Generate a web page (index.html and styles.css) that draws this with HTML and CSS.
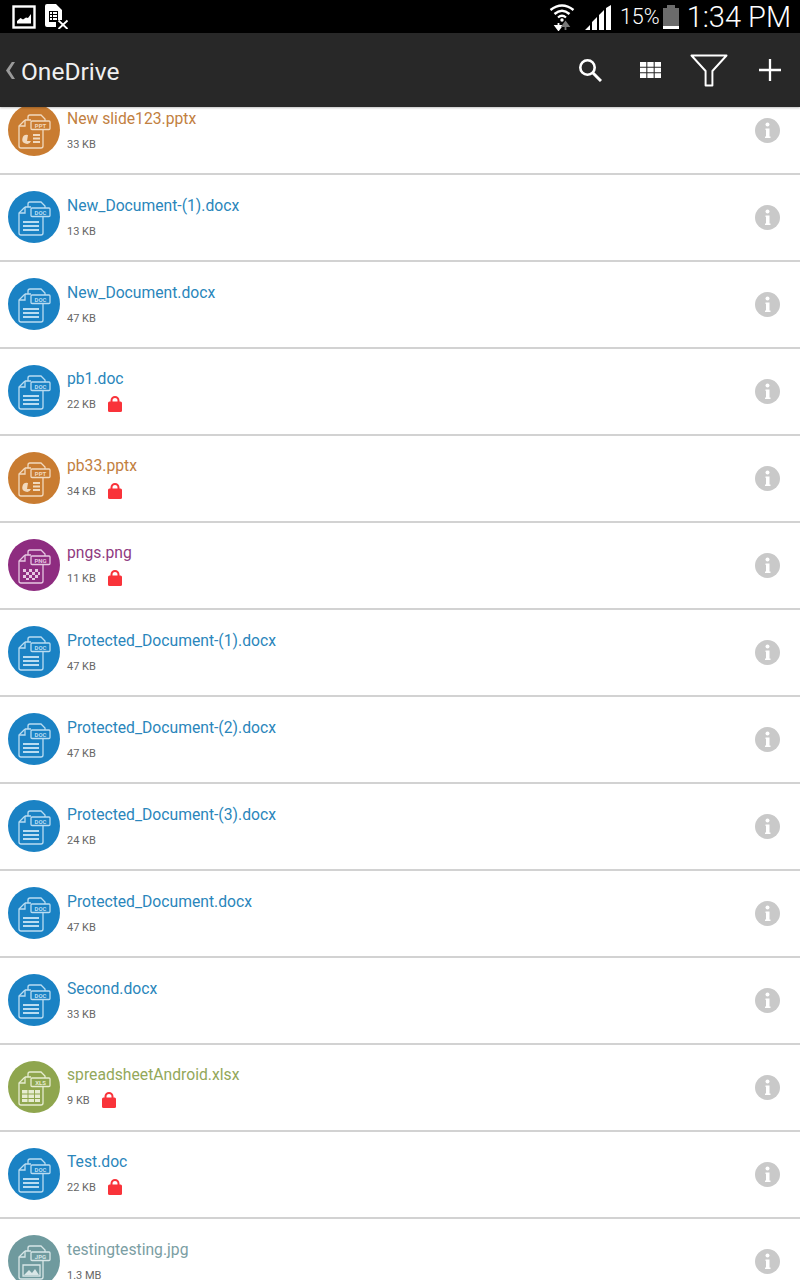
FILE: index.html
```html
<!DOCTYPE html>
<html lang="en">
<head>
    <meta charset="UTF-8">
    <meta name="viewport" content="width=device-width, initial-scale=1.0">
    <title>OneDrive</title>
    <link rel="stylesheet" href="styles.css">
</head>
<body>

<svg class="defs" width="0" height="0">
    <defs>
        <g id="sheet" fill="none" stroke="currentColor" stroke-width="1.3">
            <path d="M20 16V13q0-2 2-2H33l4 4v2"/>
            <path d="M17 16L11 22V42q0 2 2 2H33q2 0 2-2V26"/>
            <path d="M17 16H23M17 16v6h-6"/>
            <rect x="23" y="17" width="19" height="8.5" rx="1"/>
        </g>
        <symbol id="file-doc" viewBox="0 0 52 52">
            <circle cx="26" cy="26" r="26" fill="#1a82c4"/>
            <g color="#b9dcf1">
                <use href="#sheet"/>
                <text class="tag" x="32.5" y="23.6">DOC</text>
                <path d="M15 31H31M15 35H31M15 39H31" stroke="currentColor" stroke-width="2.2"/>
            </g>
        </symbol>
        <symbol id="file-ppt" viewBox="0 0 52 52">
            <circle cx="26" cy="26" r="26" fill="#c97c31"/>
            <g color="#f1d9be">
                <use href="#sheet"/>
                <text class="tag" x="32.5" y="23.6">PPT</text>
                <path d="M20 31a4.500 4.500 0 1 0 3 6h-4z" fill="currentColor"/>
                <path d="M25 31H32M25 34.500H32M25 38H32" stroke="currentColor" stroke-width="2"/>
            </g>
        </symbol>
        <symbol id="file-png" viewBox="0 0 52 52">
            <circle cx="26" cy="26" r="26" fill="#8e2c80"/>
            <g color="#e6c6e1">
                <use href="#sheet"/>
                <text class="tag" x="32.5" y="23.6">PNG</text>
                <path d="M15 30h3v3h-3zM21 30h3v3h-3zM27 30h3v3h-3zM18 33h3v3h-3zM24 33h3v3h-3zM30 33h2v3h-2zM15 36h3v3h-3zM21 36h3v3h-3zM27 36h3v3h-3zM18 39h3v2h-3zM24 39h3v2h-3z" fill="currentColor"/>
            </g>
        </symbol>
        <symbol id="file-xls" viewBox="0 0 52 52">
            <circle cx="26" cy="26" r="26" fill="#8fa64e"/>
            <g color="#e6ecd0">
                <use href="#sheet"/>
                <text class="tag" x="32.500" y="23.6">XLS</text>
                <path d="M14 29h5.500v3.500H14zM20.500 29H26v3.500h-5.500zM27 29h5v3.500h-5zM14 33.500h5.500V37H14zM20.500 33.500H26V37h-5.500zM27 33.500h5V37h-5zM14 38h5.500v3H14zM20.500 38H26v3h-5.500zM27 38h5v3h-5z" fill="currentColor"/>
            </g>
        </symbol>
        <symbol id="file-jpg" viewBox="0 0 52 52">
            <circle cx="26" cy="26" r="26" fill="#6f9a9e"/>
            <g color="#d8e6e7">
                <use href="#sheet"/>
                <text class="tag" x="32.5" y="23.6">JPG</text>
                <path d="M15 30H32V41H15z" fill="none" stroke="currentColor" stroke-width="1.300"/>
                <path d="M16 40l5-5 3 3 3-4 4 6z" fill="currentColor"/>
            </g>
        </symbol>
        <symbol id="lock" viewBox="0 0 14 16">
            <path d="M3.500 7V4.500a3.500 3.500 0 0 1 7 0V7" fill="none" stroke="#f9333a" stroke-width="2"/>
            <rect y="5.500" width="14" height="10.500" rx="1.500" fill="#f9333a"/>
        </symbol>
        <symbol id="info" viewBox="0 0 25 25">
            <circle cx="12.500" cy="12.500" r="12.500" fill="#c9c9c9"/>
            <circle cx="12.500" cy="6.500" r="2" fill="#fff"/>
            <path d="M10.500 10.500H14.500V18.500H15.500V20H10V18.500H11V12H10.500z" fill="#fff"/>
        </symbol>
    </defs>
</svg>

<div class="screen">
    <div class="status-bar">
        <div class="status-left">
            <svg width="24" height="24" viewBox="0 0 24 24">
                <rect x="1.500" y="1.500" width="21" height="21" fill="none" stroke="#fff" stroke-width="2.400"/>
                <path d="M5 18.500V16l3.500-3 2.500 1.500 3-2 2 .5L19 9v9.500z" fill="#fff"/>
            </svg>
            <svg width="24" height="25" viewBox="0 0 24 25">
                <path d="M0 2q0-2 2-2H11l6 6V16H11V23H2q-2 0-2-2z" fill="#fff"/>
                <path d="M4 7h9v11H4z" fill="#000"/>
                <path d="M5 8h2v2H5zM8 8h4v2H8zM5 11h2v2H5zM8 11h4v2H8zM5 14h2v2H5zM8 14h4v2H8z" fill="#fff"/>
                <path d="M13.500 16.500L22.500 25M22.500 16.500L13.500 25" stroke="#fff" stroke-width="1.800"/>
            </svg>
        </div>
        <div class="status-right">
            <svg class="wifi" width="26" height="29" viewBox="0 0 26 29">
                <path d="M1.500 8Q13-1 24.500 8" fill="none" stroke="#fff" stroke-width="2.400"/>
                <path d="M5.500 12Q13 5.500 20.500 12" fill="none" stroke="#fff" stroke-width="2.400"/>
                <path d="M9 15.500Q13 12 17 15.500" fill="none" stroke="#fff" stroke-width="2.200"/>
                <circle cx="13" cy="18" r="1.700" fill="#fff"/>
                <path d="M9.500 21V26M6.500 24L9.500 28 12.500 24z" stroke="#fff" stroke-width="1.800" fill="#fff"/>
                <path d="M16.500 28V23M13.500 24L16.500 20 19.500 24z" stroke="#777" stroke-width="1.800" fill="#777"/>
            </svg>
            <svg class="signal" width="27" height="25" viewBox="0 0 27 25">
                <path d="M0 25L5 20V25zM7 25V17L12 12V25zM14 25V10L19 5V25zM21 25V3L26 0V25z" fill="#fff"/>
            </svg>
            <span class="battery-text">15%</span>
            <div class="battery"><div class="battery-level"></div></div>
            <span class="clock">1:34 PM</span>
        </div>
    </div>

    <div class="toolbar">
        <svg class="back" width="9" height="17" viewBox="0 0 10 18" preserveAspectRatio="none">
            <path d="M6.500 0H10L4 9l6 9H6.500L0 9z" fill="#9a9a9a"/>
        </svg>
        <span class="title">OneDrive</span>
        <div class="actions">
            <button class="action">
                <svg width="24" height="24" viewBox="0 0 24 24">
                    <circle cx="9.500" cy="9.500" r="7.200" fill="none" stroke="#fff" stroke-width="2.600"/>
                    <path d="M14.500 14.500L23 23" stroke="#fff" stroke-width="3"/>
                </svg>
            </button>
            <button class="action">
                <svg width="21" height="16" viewBox="0 0 21 16">
                    <path d="M0 0h6.300v4.700H0zM7.350 0h6.300v4.700h-6.300zM14.700 0H21v4.700h-6.300zM0 5.650h6.300v4.700H0zM7.350 5.650h6.300v4.700h-6.300zM14.700 5.650H21v4.700h-6.300zM0 11.300h6.300V16H0zM7.350 11.300h6.300V16h-6.300zM14.700 11.300H21V16h-6.300z" fill="#fff"/>
                </svg>
            </button>
            <button class="action">
                <svg class="filter-icon" width="38" height="33" viewBox="0 0 39 33" preserveAspectRatio="none">
                    <path d="M1.500 1.500H37.500L23 17V31.500H16V17z" fill="none" stroke="#fff" stroke-width="2" stroke-linejoin="round"/>
                </svg>
            </button>
            <button class="action">
                <svg width="22" height="22" viewBox="0 0 23 23">
                    <path d="M11.500 0V23M0 11.500H23" stroke="#fff" stroke-width="2.400"/>
                </svg>
            </button>
        </div>
    </div>

    <div class="list-wrap">
        <ul class="file-list">
            <li class="file-row ppt">
                <svg class="file-icon"><use href="#file-ppt"/></svg>
                <div class="file-text">
                    <div class="file-name">New slide123.pptx</div>
                    <div class="file-meta"><span class="file-size">33 KB</span></div>
                </div>
                <svg class="info-icon"><use href="#info"/></svg>
            </li>
            <li class="file-row doc">
                <svg class="file-icon"><use href="#file-doc"/></svg>
                <div class="file-text">
                    <div class="file-name">New_Document-(1).docx</div>
                    <div class="file-meta"><span class="file-size">13 KB</span></div>
                </div>
                <svg class="info-icon"><use href="#info"/></svg>
            </li>
            <li class="file-row doc">
                <svg class="file-icon"><use href="#file-doc"/></svg>
                <div class="file-text">
                    <div class="file-name">New_Document.docx</div>
                    <div class="file-meta"><span class="file-size">47 KB</span></div>
                </div>
                <svg class="info-icon"><use href="#info"/></svg>
            </li>
            <li class="file-row doc locked">
                <svg class="file-icon"><use href="#file-doc"/></svg>
                <div class="file-text">
                    <div class="file-name">pb1.doc</div>
                    <div class="file-meta"><span class="file-size">22 KB</span><svg class="lock-icon"><use href="#lock"/></svg></div>
                </div>
                <svg class="info-icon"><use href="#info"/></svg>
            </li>
            <li class="file-row ppt locked">
                <svg class="file-icon"><use href="#file-ppt"/></svg>
                <div class="file-text">
                    <div class="file-name">pb33.pptx</div>
                    <div class="file-meta"><span class="file-size">34 KB</span><svg class="lock-icon"><use href="#lock"/></svg></div>
                </div>
                <svg class="info-icon"><use href="#info"/></svg>
            </li>
            <li class="file-row png locked">
                <svg class="file-icon"><use href="#file-png"/></svg>
                <div class="file-text">
                    <div class="file-name">pngs.png</div>
                    <div class="file-meta"><span class="file-size">11 KB</span><svg class="lock-icon"><use href="#lock"/></svg></div>
                </div>
                <svg class="info-icon"><use href="#info"/></svg>
            </li>
            <li class="file-row doc">
                <svg class="file-icon"><use href="#file-doc"/></svg>
                <div class="file-text">
                    <div class="file-name">Protected_Document-(1).docx</div>
                    <div class="file-meta"><span class="file-size">47 KB</span></div>
                </div>
                <svg class="info-icon"><use href="#info"/></svg>
            </li>
            <li class="file-row doc">
                <svg class="file-icon"><use href="#file-doc"/></svg>
                <div class="file-text">
                    <div class="file-name">Protected_Document-(2).docx</div>
                    <div class="file-meta"><span class="file-size">47 KB</span></div>
                </div>
                <svg class="info-icon"><use href="#info"/></svg>
            </li>
            <li class="file-row doc">
                <svg class="file-icon"><use href="#file-doc"/></svg>
                <div class="file-text">
                    <div class="file-name">Protected_Document-(3).docx</div>
                    <div class="file-meta"><span class="file-size">24 KB</span></div>
                </div>
                <svg class="info-icon"><use href="#info"/></svg>
            </li>
            <li class="file-row doc">
                <svg class="file-icon"><use href="#file-doc"/></svg>
                <div class="file-text">
                    <div class="file-name">Protected_Document.docx</div>
                    <div class="file-meta"><span class="file-size">47 KB</span></div>
                </div>
                <svg class="info-icon"><use href="#info"/></svg>
            </li>
            <li class="file-row doc">
                <svg class="file-icon"><use href="#file-doc"/></svg>
                <div class="file-text">
                    <div class="file-name">Second.docx</div>
                    <div class="file-meta"><span class="file-size">33 KB</span></div>
                </div>
                <svg class="info-icon"><use href="#info"/></svg>
            </li>
            <li class="file-row xls locked">
                <svg class="file-icon"><use href="#file-xls"/></svg>
                <div class="file-text">
                    <div class="file-name">spreadsheetAndroid.xlsx</div>
                    <div class="file-meta"><span class="file-size">9 KB</span><svg class="lock-icon"><use href="#lock"/></svg></div>
                </div>
                <svg class="info-icon"><use href="#info"/></svg>
            </li>
            <li class="file-row doc locked">
                <svg class="file-icon"><use href="#file-doc"/></svg>
                <div class="file-text">
                    <div class="file-name">Test.doc</div>
                    <div class="file-meta"><span class="file-size">22 KB</span><svg class="lock-icon"><use href="#lock"/></svg></div>
                </div>
                <svg class="info-icon"><use href="#info"/></svg>
            </li>
            <li class="file-row jpg">
                <svg class="file-icon"><use href="#file-jpg"/></svg>
                <div class="file-text">
                    <div class="file-name">testingtesting.jpg</div>
                    <div class="file-meta"><span class="file-size">1.3 MB</span></div>
                </div>
                <svg class="info-icon"><use href="#info"/></svg>
            </li>
        </ul>
    </div>
</div>

</body>
</html>
```

FILE: styles.css
```css
html, body {
    height: 100%;
    overflow: hidden;
}
body {
    font-family: Roboto, "Liberation Sans", sans-serif;
    background-color: #fff;
    margin: 0;
}
.defs {
    display: block;
    height: 0;
}
.tag {
    font-family: Roboto, sans-serif;
    font-size: 6px;
    font-weight: 700;
    text-anchor: middle;
    fill: currentColor;
}
.screen {
    display: flex;
    flex-direction: column;
    height: 100vh;
}
.status-bar {
    display: flex;
    justify-content: space-between;
    align-items: center;
    height: 33px;
    flex-shrink: 0;
    padding: 0 9px 0 12px;
    background-color: #000;
    color: #fff;
}
.status-left {
    display: flex;
    align-items: center;
    gap: 9px;
}
.status-right {
    display: flex;
    align-items: center;
}
.wifi {
    margin-right: 10px;
}
.signal {
    margin-right: 8px;
    margin-top: 2px;
}
.battery-text {
    font-size: 21.5px;
    font-weight: 300;
    margin-right: 3px;
}
.battery {
    display: flex;
    flex-direction: column;
    justify-content: flex-end;
    position: relative;
    width: 16px;
    height: 21px;
    margin-top: 3px;
    margin-right: 8px;
    background-color: #6b6b6b;
}
.battery::before {
    content: "";
    position: absolute;
    top: -3px;
    left: 4px;
    width: 8px;
    height: 3px;
    background-color: #6b6b6b;
}
.battery-level {
    height: 3px;
    background-color: #fff;
}
.clock {
    font-size: 29px;
    font-weight: 300;
}
.toolbar {
    display: flex;
    align-items: center;
    position: relative;
    z-index: 1;
    height: 74px;
    flex-shrink: 0;
    padding-left: 6px;
    background-color: #282828;
    box-shadow: 0 1px 2px rgba(0, 0, 0, 0.25);
}
.back {
    margin-right: 6px;
}
.title {
    flex: 1;
    padding-top: 3px;
    font-size: 24.5px;
    color: #f0f0f0;
}
.actions {
    display: flex;
    align-items: center;
}
.action {
    display: flex;
    justify-content: center;
    align-items: center;
    width: 60px;
    height: 74px;
    padding: 0;
    background: none;
    border: none;
}
.filter-icon {
    margin-left: -2px;
}
.list-wrap {
    flex: 1;
    overflow: hidden;
}
.file-list {
    list-style: none;
    margin: -19px 0 0;
    padding: 0;
}
.file-row {
    display: flex;
    align-items: center;
    box-sizing: border-box;
    height: 87px;
    padding: 0 20px 0 8px;
    border-bottom: 2px solid #d2d2d2;
}
.file-icon {
    width: 52px;
    height: 52px;
    flex-shrink: 0;
    margin-right: 7px;
    margin-bottom: 1px;
}
.file-text {
    flex: 1;
    padding-bottom: 1px;
}
.locked .file-text {
    padding-bottom: 2px;
}
.file-name {
    font-size: 15.7px;
    line-height: 20px;
    margin-bottom: 9px;
}
.file-meta {
    display: flex;
    align-items: center;
    height: 14px;
    font-size: 11px;
    color: #666;
}
.file-size {
    line-height: 14px;
}
.lock-icon {
    width: 14px;
    height: 16px;
    margin-left: 12px;
    margin-top: -2px;
}
.info-icon {
    width: 25px;
    height: 25px;
    flex-shrink: 0;
}
.doc .file-name {
    color: #2a86bb;
}
.ppt .file-name {
    color: #c2803f;
}
.png .file-name {
    color: #8f3a7f;
}
.xls .file-name {
    color: #93a85a;
}
.jpg .file-name {
    color: #7b9ea3;
}
```
